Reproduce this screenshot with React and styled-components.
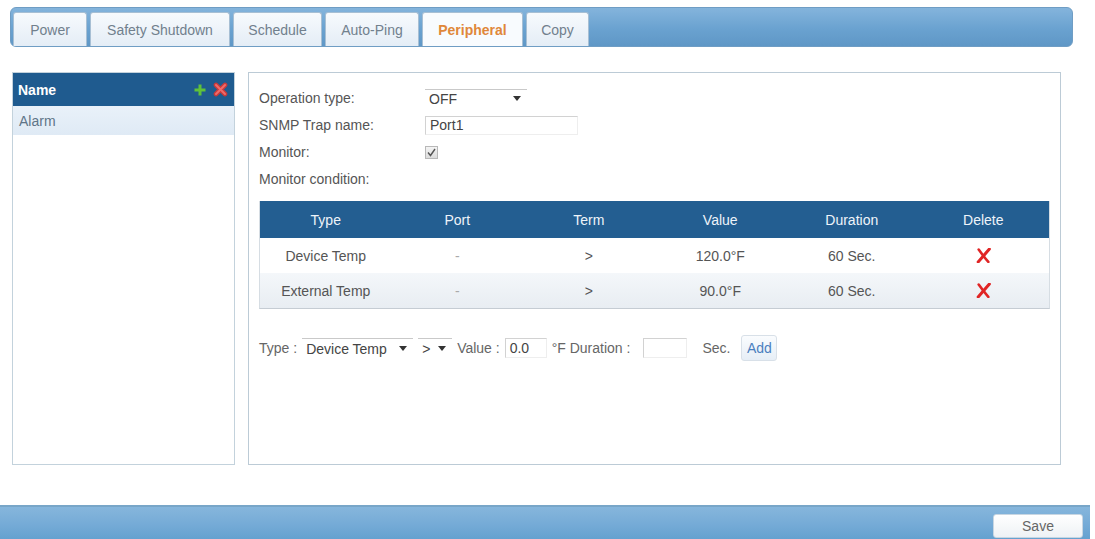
import React from 'react';
import styled, { createGlobalStyle } from 'styled-components';

const GlobalStyle = createGlobalStyle`
    body {
        margin: 0;
        background: #fff;
        font-family: 'Liberation Sans', Arial, sans-serif;
        color: #555;
    }
`

const Page = styled.div`
    width: 1095px;
    height: 539px;
    overflow: hidden;
    padding-top: 7px;
    box-sizing: border-box;
`

const TabBar = styled.div`
    margin: 0 22px 0 10px;
    height: 40px;
    border-radius: 6px;
    border: 1px solid #6f9dc4;
    box-sizing: border-box;
    background: linear-gradient(#84b4dc, #6aa2d0 55%, #5f97c6);
    display: flex;
    align-items: flex-end;
    gap: 3px;
    padding-left: 2px;
`

const Tab = styled.div`
    width: ${p => p.w}px;
    height: 34px;
    box-sizing: border-box;
    display: flex;
    align-items: center;
    justify-content: center;
    font-size: 14px;
    border: 1px solid #a7bfd4;
    border-bottom: none;
    border-radius: 3px 3px 0 0;
    background: ${p => p.active ? '#f8fbfe' : 'linear-gradient(#f7fafd, #e4edf6)'};
    color: ${p => p.active ? '#e0873a' : '#71808d'};
    font-weight: ${p => p.active ? 'bold' : 'normal'};
`

const Body = styled.div`
    display: flex;
    gap: 13px;
    margin-top: 25px;
    padding-left: 12px;
`

const Sidebar = styled.div`
    width: 223px;
    height: 393px;
    box-sizing: border-box;
    border: 1px solid #c3d2dc;
`

const SideHeader = styled.div`
    height: 33px;
    background: #1f5b8f;
    display: flex;
    align-items: center;
    padding: 0 6px 0 5px;
    color: #fff;
    font-size: 14px;
    font-weight: bold;
    justify-content: space-between;
`

const SideIcons = styled.div`
    display: flex;
    align-items: center;
    gap: 7px;
`

const SideRow = styled.div`
    height: 29px;
    display: flex;
    align-items: center;
    padding-left: 6px;
    font-size: 14px;
    color: #5f7588;
    background: linear-gradient(#e9f1f9, #dfeaf5);
`

const Main = styled.div`
    width: 813px;
    height: 393px;
    box-sizing: border-box;
    border: 1px solid #bccbd6;
    padding: 12px 10px 0 10px;
`

const FormRow = styled.div`
    display: flex;
    align-items: center;
    height: ${p => p.h || 26}px;
    font-size: 14px;
    color: #555;
`

const Label = styled.div`
    width: 166px;
`

const Select = styled.div`
    width: ${p => p.w}px;
    height: ${p => p.h || 18}px;
    box-sizing: border-box;
    border-top: 1px solid #c9c9c9;
    display: flex;
    align-items: center;
    justify-content: space-between;
    padding: 0 6px 0 4px;
    font-size: 14px;
    color: #444;
    background: #fff;
`

const Caret = styled.span`
    width: 0;
    height: 0;
    border-left: 4px solid transparent;
    border-right: 4px solid transparent;
    border-top: 5px solid #333;
`

const Input = styled.div`
    width: ${p => p.w}px;
    height: ${p => p.h || 19}px;
    margin-left: ${p => p.ml || 0}px;
    box-sizing: border-box;
    border: 1px solid #d2d2d2;
    border-bottom-color: #eee;
    border-right-color: #eee;
    display: flex;
    align-items: center;
    padding-left: 4px;
    font-size: 14px;
    color: #444;
`

const Check = styled.div`
    width: 13px;
    height: 13px;
    box-sizing: border-box;
    border: 1px solid #b8b8b8;
    background: linear-gradient(#f4f4f4, #dcdcdc);
    display: flex;
    align-items: center;
    justify-content: center;
`

const Table = styled.div`
    width: 789px;
    margin-top: 8px;
    border: 1px solid #d6dde3;
    border-top: none;
    border-bottom-color: #c5ccd3;
`

const TRow = styled.div`
    display: grid;
    grid-template-columns: repeat(6, 1fr);
    height: ${p => p.h}px;
    align-items: center;
    background: ${p => p.bg};
    color: ${p => p.head ? '#eef4fa' : '#555'};
    font-size: 14px;
`

const Cell = styled.div`
    display: flex;
    justify-content: center;
    align-items: center;
    color: ${p => p.muted ? '#aaa' : 'inherit'};
`

const AddRow = styled.div`
    display: flex;
    align-items: center;
    margin-top: 26px;
    font-size: 14px;
    color: #666;
    gap: 5px;
`

const Unit = styled.span`
    margin-left: ${p => p.ml || 0}px;
`

const AddButton = styled.div`
    width: 36px;
    height: 26px;
    margin-left: 6px;
    box-sizing: border-box;
    border: 1px solid #d8e0e8;
    border-radius: 3px;
    background: linear-gradient(#fafcfe, #e6eef6);
    color: #4a7fbf;
    display: flex;
    align-items: center;
    justify-content: center;
    font-size: 14px;
`

const Footer = styled.div`
    margin-top: 40px;
    margin-right: 5px;
    height: 36px;
    box-sizing: border-box;
    border-top: 2px solid #78a6c8;
    background: linear-gradient(#86b6dc, #74aad6 55%, #62a0ce);
    display: flex;
    justify-content: flex-end;
    padding: 7px 7px 0 0;
`

const SaveButton = styled.div`
    width: 90px;
    height: 24px;
    box-sizing: border-box;
    border: 1px solid #c8d6e2;
    border-radius: 3px;
    background: linear-gradient(#ffffff, #eef2f5);
    color: #666;
    font-size: 14px;
    display: flex;
    align-items: center;
    justify-content: center;
`

const tabs = [
    { title: 'Power', w: 74 },
    { title: 'Safety Shutdown', w: 140 },
    { title: 'Schedule', w: 89 },
    { title: 'Auto-Ping', w: 94 },
    { title: 'Peripheral', w: 101, active: true },
    { title: 'Copy', w: 63 },
];

const conditions = [
    { type: 'Device Temp', port: '-', term: '>', value: '120.0°F', duration: '60 Sec.' },
    { type: 'External Temp', port: '-', term: '>', value: '90.0°F', duration: '60 Sec.' },
];

const PlusIcon = () => (
    <svg width="12" height="12" viewBox="0 0 12 12">
        <path d="M6 0.5v11M0.5 6h11" stroke="#5fc23a" strokeWidth="3" />
    </svg>
)

const RemoveIcon = () => (
    <svg width="15" height="15" viewBox="0 0 15 15">
        <path d="M3 3l9 9M12 3l-9 9" stroke="#c93a3a" strokeWidth="4.6" strokeLinecap="round" />
        <path d="M3 3l9 9M12 3l-9 9" stroke="#ef6b6b" strokeWidth="2" strokeLinecap="round" />
    </svg>
)

const DeleteIcon = () => (
    <svg width="15" height="15" viewBox="0 0 14 14">
        <path d="M2.5 1.5C5 5 8 9 11.5 13" stroke="#e02525" strokeWidth="2.4" strokeLinecap="round" fill="none" />
        <path d="M12.5 1C9.5 4.5 6 8.5 2 13" stroke="#e02525" strokeWidth="2.8" strokeLinecap="round" fill="none" />
    </svg>
)

const CheckMark = () => (
    <svg width="9" height="9" viewBox="0 0 9 9">
        <path d="M1 4.5l2.5 3L8 1" stroke="#555" strokeWidth="1.4" fill="none" />
    </svg>
)

const App = () => {
    return (
        <Page>
            <GlobalStyle />
            <TabBar>
                {tabs.map((tab, index) => (
                    <Tab key={index} w={tab.w} active={tab.active}>{tab.title}</Tab>
                ))}
            </TabBar>
            <Body>
                <Sidebar>
                    <SideHeader>
                        Name
                        <SideIcons>
                            <PlusIcon />
                            <RemoveIcon />
                        </SideIcons>
                    </SideHeader>
                    <SideRow>Alarm</SideRow>
                </Sidebar>
                <Main>
                    <FormRow>
                        <Label>Operation type:</Label>
                        <Select w={102}>OFF <Caret /></Select>
                    </FormRow>
                    <FormRow h={28}>
                        <Label>SNMP Trap name:</Label>
                        <Input w={153}>Port1</Input>
                    </FormRow>
                    <FormRow>
                        <Label>Monitor:</Label>
                        <Check><CheckMark /></Check>
                    </FormRow>
                    <FormRow h={28}>
                        <Label>Monitor condition:</Label>
                    </FormRow>
                    <Table>
                        <TRow head h={37} bg="#235e91">
                            <Cell>Type</Cell>
                            <Cell>Port</Cell>
                            <Cell>Term</Cell>
                            <Cell>Value</Cell>
                            <Cell>Duration</Cell>
                            <Cell>Delete</Cell>
                        </TRow>
                        {conditions.map((c, index) => (
                            <TRow key={index} h={35} bg={index % 2 ? 'linear-gradient(#f4f7fa, #e8edf2)' : '#fff'}>
                                <Cell>{c.type}</Cell>
                                <Cell muted>{c.port}</Cell>
                                <Cell>{c.term}</Cell>
                                <Cell>{c.value}</Cell>
                                <Cell>{c.duration}</Cell>
                                <Cell><DeleteIcon /></Cell>
                            </TRow>
                        ))}
                    </Table>
                    <AddRow>
                        Type :
                        <Select w={111} h={20}>Device Temp <Caret /></Select>
                        <Select w={34} h={20}>&gt; <Caret /></Select>
                        Value :
                        <Input w={42} h={20}>0.0</Input>
                        °F Duration :
                        <Input w={44} h={20} ml={8} />
                        <Unit ml={10}>Sec.</Unit>
                        <AddButton>Add</AddButton>
                    </AddRow>
                </Main>
            </Body>
            <Footer>
                <SaveButton>Save</SaveButton>
            </Footer>
        </Page>
    )
}

export default App;
